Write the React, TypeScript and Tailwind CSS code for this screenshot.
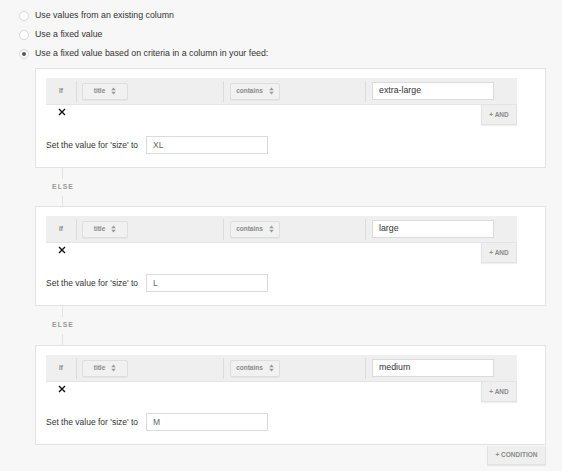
import React from "react";

function SortIcon() {
  return (
    <svg width="5" height="8" viewBox="0 0 5 8" className="ml-[6px]">
      <path d="M2.5 0.5L4.8 3.2H0.2z M2.5 7.5L0.2 4.8h4.6z" fill="#9a9a9a" />
    </svg>
  );
}

function SelectBtn({ label, w }: { label: string; w: string }) {
  return (
    <div
      className={`${w} h-[17px] flex items-center justify-center bg-[#f1f1f1] border border-[#dedede] rounded-[2px] shadow-[0_1px_0_rgba(0,0,0,0.04)] text-[6.5px] font-bold text-[#8a8a8a]`}
    >
      <span>{label}</span>
      <SortIcon />
    </div>
  );
}

function Radio({ label, selected }: { label: string; selected?: boolean }) {
  return (
    <div className="h-[19px] flex items-center">
      <span className="w-[10px] h-[10px] rounded-full border border-[#d9d9d9] bg-white flex items-center justify-center">
        {selected && <span className="w-[4px] h-[4px] rounded-full bg-[#555]" />}
      </span>
      <span className="ml-[6px] text-[8.8px] text-[#333]">{label}</span>
    </div>
  );
}

function RuleBox({ value, size }: { value: string; size: string }) {
  return (
    <div className="border border-[#e3e3e3] bg-white pt-[9px] pl-[10px] pr-[28px] pb-[13px]">
      <div className="flex h-[27px] bg-[#efefef] border-b border-[#e4e4e4] items-center">
        <div className="w-[30px] flex justify-center text-[6.5px] font-bold text-[#888]">If</div>
        <div className="w-px h-[21px] bg-[#dcdcdc]" />
        <div className="w-[146px] pl-[5px]">
          <SelectBtn label="title" w="w-[46px]" />
        </div>
        <div className="w-px h-[21px] bg-[#dcdcdc]" />
        <div className="w-[141px] pl-[6px]">
          <SelectBtn label="contains" w="w-[50px]" />
        </div>
        <div className="w-px h-[21px] bg-[#dcdcdc]" />
        <div className="flex-1 pl-[6px]">
          <div className="w-[122px] h-[18px] bg-white border border-[#dadada] flex items-center pl-[6px] text-[8.8px] text-[#333]">
            {value}
          </div>
        </div>
      </div>
      <div className="flex justify-between h-[21px]">
        <div className="pl-[12px] pt-[3px]">
          <svg width="8" height="8" viewBox="0 0 8 8">
            <path d="M1 1L7 7M7 1L1 7" stroke="#111" strokeWidth="1.4" />
          </svg>
        </div>
        <div className="w-[36px] h-[20px] bg-[#efefef] border border-t-0 border-[#e2e2e2] shadow-[0_1px_1px_rgba(0,0,0,0.06)] flex items-center justify-center text-[6.5px] font-bold text-[#8a8a8a]">
          + AND
        </div>
      </div>
      <div className="flex items-center mt-[10px]">
        <div className="w-[100px] text-[8.5px] text-[#333] whitespace-nowrap">Set the value for 'size' to</div>
        <div className="w-[122px] h-[18px] bg-white border border-[#dadada] flex items-center pl-[6px] text-[8.5px] text-[#666]">
          {size}
        </div>
      </div>
    </div>
  );
}

function Else({ tall }: { tall?: boolean }) {
  return (
    <div className={`ml-[16px] w-[23px] ${tall ? "h-[39px]" : "h-[38px]"} flex flex-col items-center`}>
      <div className="w-px h-[11px] bg-[#e3e3e3]" />
      <div className="h-[17px] flex items-center text-[6.8px] font-bold tracking-[1px] text-[#999] pl-[1px]">ELSE</div>
      <div className="w-px flex-1 bg-[#e3e3e3]" />
    </div>
  );
}

export default function App() {
  return (
    <div className="min-h-[471px] w-full bg-[#f7f7f7] font-['Liberation_Sans',Arial,sans-serif]">
      <div className="pt-[6px] pl-[19px]">
        <Radio label="Use values from an existing column" />
        <Radio label="Use a fixed value" />
        <Radio label="Use a fixed value based on criteria in a column in your feed:" selected />
      </div>
      <div className="ml-[35px] w-[511px] mt-[5px]">
        <RuleBox value="extra-large" size="XL" />
        <Else />
        <RuleBox value="large" size="L" />
        <Else tall />
        <RuleBox value="medium" size="M" />
        <div className="flex justify-end">
          <div className="w-[59px] h-[19px] mt-[1px] bg-[#efefef] border border-t-0 border-[#e2e2e2] shadow-[0_1px_1px_rgba(0,0,0,0.06)] flex items-center justify-center text-[6.5px] font-bold text-[#8a8a8a]">
            + CONDITION
          </div>
        </div>
      </div>
    </div>
  );
}
